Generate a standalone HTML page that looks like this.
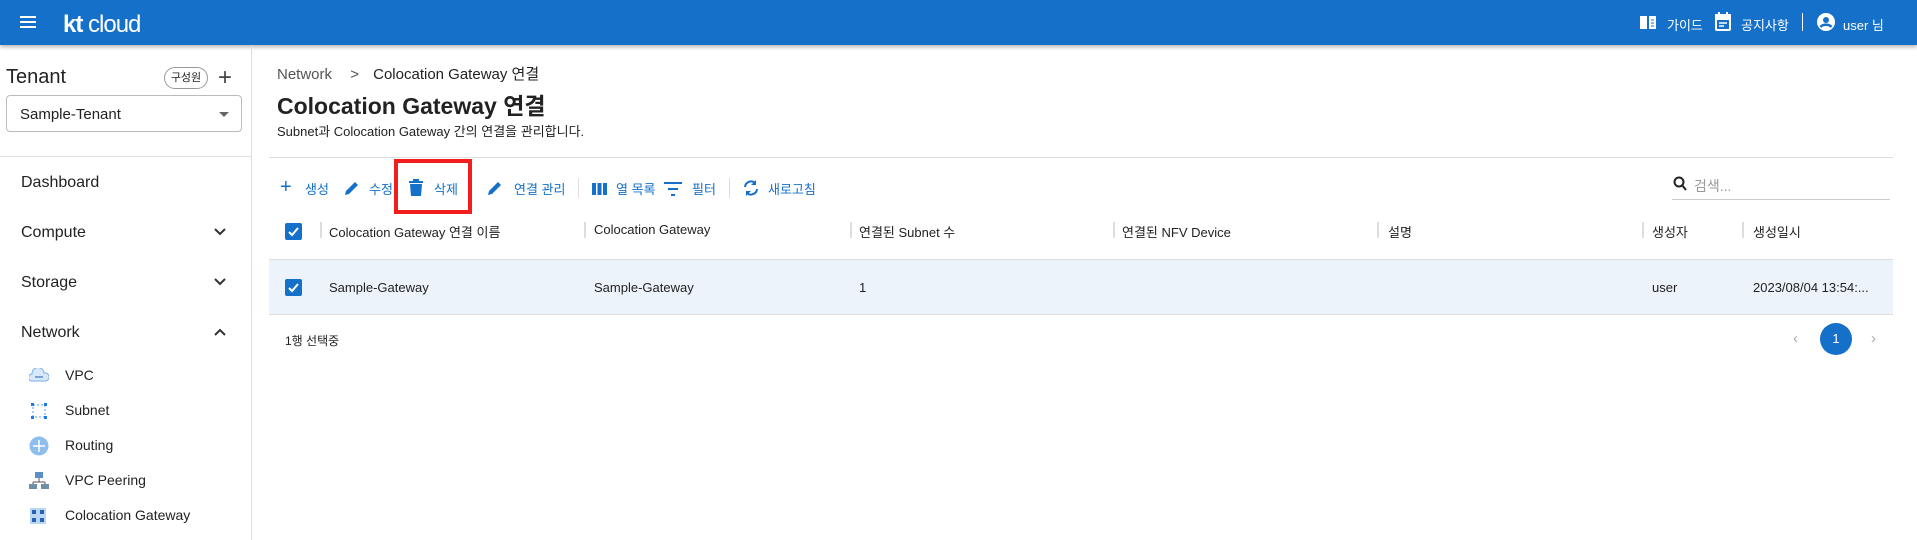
<!DOCTYPE html><html><head><meta charset="utf-8"><style>
*{box-sizing:border-box;margin:0;padding:0}
body{width:1917px;height:540px;overflow:hidden;background:#fff;font-family:"Liberation Sans","Noto Sans CJK KR",sans-serif;color:#222;position:relative}
.a{position:absolute;white-space:nowrap}
.hd{position:absolute;left:0;top:0;width:1917px;height:45px;background:#1570c9;box-shadow:0 2px 4px rgba(0,0,0,.3);color:#fff}
.side{position:absolute;left:0;top:45px;width:252px;height:495px;border-right:1px solid #ddd}
.nav{font-size:16px;color:#222}
.sub{font-size:14px;color:#222}
.tb{font-size:13px;color:#1570c9}
.th{font-size:13px;color:#222;top:222px}
.sep{position:absolute;top:222px;width:2px;height:16px;background:#ddd}
.cb{position:absolute;width:17px;height:17px;background:#1570c9;border-radius:2px}
</style></head><body>
<div class="hd">
<svg class="a" style="left:19px;top:13px" width="18" height="18" viewBox="0 0 18 18"><path d="M1 4h16M1 9h16M1 14h16" stroke="#fff" stroke-width="2"/></svg>
<div class="a" style="left:63px;top:11px;font-size:24px;font-weight:bold;letter-spacing:-1px">kt <span style="font-weight:normal">cloud</span></div>
<svg class="a" style="left:1639px;top:14px" width="18" height="16" viewBox="0 0 18 16"><path d="M1 2h7v13H1zM10 2h7v13h-7z" fill="#fff"/><path d="M12 6h3M12 9h3M12 12h3" stroke="#1570c9"/></svg>
<div class="a" style="left:1667px;top:15px;font-size:13px">가이드</div>
<svg class="a" style="left:1715px;top:12px" width="16" height="19" viewBox="0 0 16 19"><rect x="1" y="3" width="14" height="15" rx="1" fill="none" stroke="#fff" stroke-width="2"/><path d="M1 3h14v4H1zM4 0v4M12 0v4" stroke="#fff" stroke-width="2" fill="#fff"/><path d="M4 11h8M4 14h5" stroke="#fff" stroke-width="1.5"/></svg>
<div class="a" style="left:1741px;top:15px;font-size:13px">공지사항</div>
<div class="a" style="left:1802px;top:13px;width:1px;height:18px;background:#fff"></div>
<svg class="a" style="left:1817px;top:13px" width="18" height="18" viewBox="0 0 18 18"><circle cx="9" cy="9" r="9" fill="#fff"/><circle cx="9" cy="7" r="3" fill="#1570c9"/><path d="M3.5 14c2-3 9-3 11 0" stroke="#1570c9" stroke-width="2.5" fill="none"/></svg>
<div class="a" style="left:1843px;top:15px;font-size:13px">user 님</div>
</div>
<div class="side">
<div class="a" style="left:6px;top:21px;font-size:20px">Tenant</div>
<div class="a" style="left:164px;top:22px;width:44px;height:22px;border:1px solid #999;border-radius:11px;font-size:11px;text-align:center;line-height:20px">구성원</div>
<div class="a" style="left:218px;top:20px;font-size:24px;color:#444;line-height:26px">+</div>
<div class="a" style="left:6px;top:50px;width:236px;height:37px;border:1px solid #bbb;border-radius:4px;font-size:15px;padding:10px 13px">Sample-Tenant</div>
<div class="a" style="left:219px;top:67px;border:5px solid transparent;border-top-color:#666;border-bottom:0"></div>
<div class="a" style="left:0;top:111px;width:252px;height:1px;background:#ddd"></div>
<div class="a nav" style="left:21px;top:129px">Dashboard</div>
<div class="a nav" style="left:21px;top:179px">Compute</div>
<div class="a nav" style="left:21px;top:229px">Storage</div>
<div class="a nav" style="left:21px;top:279px">Network</div>
<svg class="a" style="left:214px;top:183px" width="12" height="8"><path d="M1 1l5 5 5-5" stroke="#333" stroke-width="2" fill="none"/></svg>
<svg class="a" style="left:214px;top:233px" width="12" height="8"><path d="M1 1l5 5 5-5" stroke="#333" stroke-width="2" fill="none"/></svg>
<svg class="a" style="left:214px;top:283px" width="12" height="8"><path d="M1 7l5-5 5 5" stroke="#333" stroke-width="2" fill="none"/></svg>
<svg class="a" style="left:29px;top:323px" width="20" height="14"><path d="M3 13a3 3 0 010-7 6 6 0 0112-1 4 4 0 012 8z" fill="#d6e8f9" stroke="#7aaee3"/><path d="M6 9h8" stroke="#1a5fae"/></svg>
<div class="a sub" style="left:65px;top:322px">VPC</div>
<svg class="a" style="left:30px;top:357px" width="18" height="18"><rect x="3" y="3" width="12" height="12" fill="none" stroke="#5aa0e8" stroke-dasharray="2 2"/><g fill="#1e7be0"><rect x="1" y="1" width="3" height="3"/><rect x="14" y="1" width="3" height="3"/><rect x="1" y="14" width="3" height="3"/><rect x="14" y="14" width="3" height="3"/></g></svg>
<div class="a sub" style="left:65px;top:357px">Subnet</div>
<svg class="a" style="left:29px;top:391px" width="20" height="20"><circle cx="10" cy="10" r="9.5" fill="#8ebef0"/><path d="M10 4v12M4 10h12" stroke="#fff" stroke-width="1.5"/></svg>
<div class="a sub" style="left:65px;top:392px">Routing</div>
<svg class="a" style="left:29px;top:427px" width="20" height="18"><rect x="6" y="0" width="8" height="6" fill="#5a8fc8"/><path d="M10 6v4M4 10h12M4 10v2M16 10v2" stroke="#555"/><rect x="0" y="12" width="8" height="5" fill="#6d8fa8"/><rect x="12" y="12" width="8" height="5" fill="#6d8fa8"/></svg>
<div class="a sub" style="left:65px;top:427px">VPC Peering</div>
<svg class="a" style="left:30px;top:463px" width="16" height="16"><rect width="16" height="16" fill="#b9d6f5"/><g fill="#2a5fb8"><rect x="2" y="2" width="4" height="4"/><rect x="10" y="2" width="4" height="4"/><rect x="2" y="10" width="4" height="4"/><rect x="10" y="10" width="4" height="4"/></g></svg>
<div class="a sub" style="left:65px;top:462px">Colocation Gateway</div>
</div>
<div class="a" style="left:277px;top:63px;font-size:15px;color:#555">Network <span style="margin:0 10px 0 14px">&gt;</span> <span style="color:#222">Colocation Gateway 연결</span></div>
<div class="a" style="left:277px;top:87px;font-size:23px;font-weight:bold">Colocation Gateway 연결</div>
<div class="a" style="left:277px;top:121px;font-size:13px">Subnet과 Colocation Gateway 간의 연결을 관리합니다.</div>
<div class="a" style="left:269px;top:157px;width:1624px;height:1px;background:#ddd"></div>
<div class="a tb" style="left:280px;top:177px;font-size:20px;line-height:20px">+</div>
<div class="a tb" style="left:305px;top:179px">생성</div>
<svg class="a" style="left:344px;top:180px" width="16" height="16"><path d="M1 15l1-4 9-9 3 3-9 9z" fill="#1570c9"/></svg>
<div class="a tb" style="left:369px;top:179px">수정</div>
<svg class="a" style="left:409px;top:179px" width="14" height="17"><path d="M0 2h14v2H0zM4 0h6v2H4zM1 5h12l-1 12H2z" fill="#1570c9"/></svg>
<div class="a tb" style="left:434px;top:179px">삭제</div>
<div class="a" style="left:394px;top:159px;width:78px;height:55px;border:4px solid #f21d1d"></div>
<svg class="a" style="left:487px;top:180px" width="16" height="16"><path d="M1 15l1-4 9-9 3 3-9 9z" fill="#1570c9"/></svg>
<div class="a tb" style="left:514px;top:179px">연결 관리</div>
<div class="a" style="left:578px;top:178px;width:1px;height:20px;background:#ddd"></div>
<svg class="a" style="left:592px;top:183px" width="15" height="12"><path d="M0 0h4v12H0zM5.5 0h4v12h-4zM11 0h4v12h-4z" fill="#1570c9"/></svg>
<div class="a tb" style="left:616px;top:179px">열 목록</div>
<svg class="a" style="left:664px;top:182px" width="18" height="14"><path d="M0 1h18M4 7h10M7 13h4" stroke="#1570c9" stroke-width="2"/></svg>
<div class="a tb" style="left:692px;top:179px">필터</div>
<div class="a" style="left:729px;top:178px;width:1px;height:20px;background:#ddd"></div>
<svg class="a" style="left:742px;top:179px" width="18" height="18"><path d="M3 8a6 6 0 0110-4M15 10a6 6 0 01-10 4" stroke="#1570c9" stroke-width="2" fill="none"/><path d="M14 1v5h-5zM4 17v-5h5z" fill="#1570c9"/></svg>
<div class="a tb" style="left:768px;top:179px">새로고침</div>
<svg class="a" style="left:1673px;top:176px" width="14" height="15"><circle cx="6" cy="6" r="4.5" stroke="#222" stroke-width="2" fill="none"/><path d="M9 9l4 5" stroke="#222" stroke-width="2"/></svg>
<div class="a" style="left:1694px;top:176px;font-size:14px;color:#999">검색...</div>
<div class="a" style="left:1672px;top:199px;width:218px;height:1px;background:#ccc"></div>
<div class="cb" style="left:285px;top:223px"></div>
<svg class="a" style="left:285px;top:223px" width="17" height="17"><path d="M4 9l3 3 6-7" stroke="#fff" stroke-width="2" fill="none"/></svg>
<div class="sep" style="left:320px"></div><div class="sep" style="left:584px"></div><div class="sep" style="left:850px"></div><div class="sep" style="left:1113px"></div><div class="sep" style="left:1377px"></div><div class="sep" style="left:1642px"></div><div class="sep" style="left:1742px"></div>
<div class="a th" style="left:329px">Colocation Gateway 연결 이름</div>
<div class="a th" style="left:594px">Colocation Gateway</div>
<div class="a th" style="left:859px">연결된 Subnet 수</div>
<div class="a th" style="left:1122px">연결된 NFV Device</div>
<div class="a th" style="left:1388px">설명</div>
<div class="a th" style="left:1652px">생성자</div>
<div class="a th" style="left:1753px">생성일시</div>
<div class="a" style="left:269px;top:259px;width:1624px;height:56px;background:#ecf3fb;border-top:1px solid #ddd;border-bottom:1px solid #ddd"></div>
<div class="cb" style="left:285px;top:279px"></div>
<svg class="a" style="left:285px;top:279px" width="17" height="17"><path d="M4 9l3 3 6-7" stroke="#fff" stroke-width="2" fill="none"/></svg>
<div class="a" style="left:329px;top:280px;font-size:13px">Sample-Gateway</div>
<div class="a" style="left:594px;top:280px;font-size:13px">Sample-Gateway</div>
<div class="a" style="left:859px;top:280px;font-size:13px">1</div>
<div class="a" style="left:1652px;top:280px;font-size:13px">user</div>
<div class="a" style="left:1753px;top:280px;font-size:13px">2023/08/04 13:54:...</div>
<div class="a" style="left:285px;top:332px;font-size:12px">1행 선택중</div>
<div class="a" style="left:1793px;top:330px;font-size:15px;color:#aaa">‹</div>
<div class="a" style="left:1820px;top:323px;width:32px;height:32px;border-radius:50%;background:#1570c9;color:#fff;font-size:13px;text-align:center;line-height:32px">1</div>
<div class="a" style="left:1871px;top:330px;font-size:15px;color:#aaa">›</div>
</body></html>
